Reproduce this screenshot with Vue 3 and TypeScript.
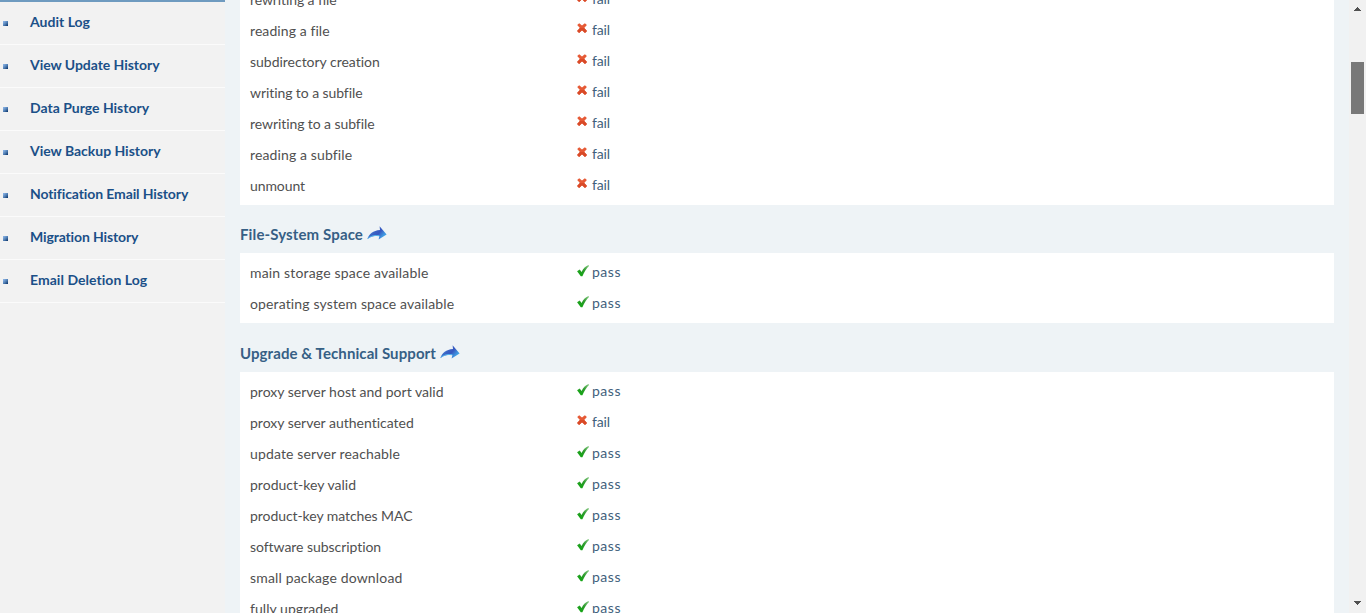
<script setup lang="ts">
type Status = 'pass' | 'fail'
interface Row { label: string; status: Status; w: number }
interface Section { title: string; w: number; rows: Row[] }

const links = [
  { label: 'Audit Log', w: 60 },
  { label: 'View Update History', w: 129.5 },
  { label: 'Data Purge History', w: 119 },
  { label: 'View Backup History', w: 130.5 },
  { label: 'Notification Email History', w: 158.5 },
  { label: 'Migration History', w: 108.5 },
  { label: 'Email Deletion Log', w: 117.5 },
]

const row = (label: string, status: Status, w: number): Row => ({ label, status, w })

const sections: Section[] = [
  {
    title: '',
    w: 0,
    rows: [
      row('rewriting a file', 'fail', 86.5),
      row('reading a file', 'fail', 79.5),
      row('subdirectory creation', 'fail', 130),
      row('writing to a subfile', 'fail', 112.5),
      row('rewriting to a subfile', 'fail', 124.5),
      row('reading a subfile', 'fail', 102),
      row('unmount', 'fail', 55),
    ],
  },
  {
    title: 'File-System Space',
    w: 123,
    rows: [
      row('main storage space available', 'pass', 178.5),
      row('operating system space available', 'pass', 204.5),
    ],
  },
  {
    title: 'Upgrade & Technical Support',
    w: 196,
    rows: [
      row('proxy server host and port valid', 'pass', 193.5),
      row('proxy server authenticated', 'fail', 164),
      row('update server reachable', 'pass', 150),
      row('product-key valid', 'pass', 106),
      row('product-key matches MAC', 'pass', 162.5),
      row('software subscription', 'pass', 131),
      row('small package download', 'pass', 152.5),
      row('fully upgraded', 'pass', 88.5),
    ],
  },
]

const vFit = {
  mounted(el: HTMLElement, binding: { value: number }) {
    const natural = el.getBoundingClientRect().width
    const count = (el.textContent ?? '').length
    el.style.letterSpacing = `${(binding.value - natural) / count}px`
  },
}
</script>

<template>
  <div class="page">
    <nav class="sidebar">
      <a v-for="l in links" :key="l.label" class="link">
        <i class="bullet"></i><span v-fit="l.w">{{ l.label }}</span>
      </a>
    </nav>
    <main class="content">
      <section v-for="s in sections" :key="s.title" class="section">
        <h3 v-if="s.title" class="title">
          <span v-fit="s.w">{{ s.title }}</span>
          <svg class="arrow" width="20" height="14" viewBox="0 0 20 14">
            <defs>
              <linearGradient id="arrowFill" x1="0" y1="0.2" x2="1" y2="0.8">
                <stop offset="0" stop-color="#49a9e6" />
                <stop offset="0.38" stop-color="#3a62c4" />
                <stop offset="0.58" stop-color="#3658c0" />
                <stop offset="0.8" stop-color="#3f92de" />
                <stop offset="1" stop-color="#42b6ef" />
              </linearGradient>
            </defs>
            <path d="M0.3 12.9C2.2 8.2 6 4.4 13 4L12.6 0.2L19.6 8.4L11.6 13.6L12.4 10C8.4 9 4.6 10.2 0.3 12.9Z" fill="url(#arrowFill)" />
            <path d="M.8 12.4C4 9.8 8 8.9 12.4 9.8" fill="none" stroke="#55b8ee" stroke-width="1" />
          </svg>
        </h3>
        <div class="panel">
          <div v-for="r in s.rows" :key="r.label" class="row">
            <div class="label"><span v-fit="r.w">{{ r.label }}</span></div>
            <div class="status">
              <svg v-if="r.status === 'fail'" class="icon cross" width="14" height="12" viewBox="0 -0.6 14 12">
                <path d="M1.2 2.4L3.2.6L6 3L8.9.6L10.9 2.4L8.2 5.3L11 8.4L9 10.3L6 7.7L3.1 10.3L1.1 8.4L3.9 5.4Z" fill="#e65a36" />
                <path d="M3.9 5.4L8.2 5.3L11 8.4L9 10.3L6 7.7L3.1 10.3L1.1 8.4Z" fill="#d94a28" />
              </svg>
              <svg v-else class="icon" width="14" height="12" viewBox="0 0 14 12">
                <defs>
                  <linearGradient id="checkFill" x1="1" y1="0" x2="0.3" y2="1">
                    <stop offset="0" stop-color="#8acb86" />
                    <stop offset="0.5" stop-color="#2d9b2d" />
                    <stop offset="1" stop-color="#10a510" />
                  </linearGradient>
                </defs>
                <path d="M1.1 6.2L3.7 4.6L5.6 6.9C7 4 9.2 1.4 12.5.1L13 .9C10.4 3.5 8.2 6.8 6.4 11.3L4.8 11.3Z" fill="url(#checkFill)" />
              </svg>
              <span v-fit="r.status === 'fail' ? 18 : 29">{{ r.status }}</span>
            </div>
          </div>
        </div>
      </section>
    </main>
    <div class="scrollbar">
      <svg class="cap" width="9" height="5" viewBox="0 0 9 5" shape-rendering="crispEdges"><path d="M4 0h1v1h1v1h1v1h1v1H1V3h1V2h1V1h1z" fill="#505050" /></svg>
      <div class="thumb"></div>
      <svg class="cap end" width="9" height="5" viewBox="0 0 9 5" shape-rendering="crispEdges"><path d="M1 0h7v1H7v1H6v1H5v1H4V3H3V2H2V1H1z" fill="#505050" /></svg>
    </div>
  </div>
</template>

<style>
body { overflow: hidden; }
</style>

<style scoped>
.page {
  display: flex;
  height: 613px;
  overflow: hidden;
  background: #eef3f6;
  font-family: Lato, "Open Sans", sans-serif;
  font-size: 14px;
  color: #505050;
  white-space: nowrap;
}
.sidebar {
  flex: 0 0 225px;
  box-sizing: border-box;
  border-top: 2px solid #6f9bc0;
  background: #f2f2f2;
}
.link {
  display: flex;
  align-items: center;
  box-sizing: border-box;
  height: 43px;
  padding: 0 0 4px 3px;
  border-bottom: 1px solid #fbfbfb;
  color: #1b5088;
  font-size: 14px;
  font-weight: 700;
}
.bullet {
  width: 5px;
  height: 5px;
  margin: 5px 22px 0 0;
  background: linear-gradient(135deg, #85aee0 15%, #5583b8 50%, #153f75 90%);
}
.content {
  flex: 1;
  padding: 0 15px;
  margin-top: -20px;
}
.title {
  display: flex;
  align-items: center;
  box-sizing: border-box;
  height: 48px;
  margin: 0;
  padding-top: 10px;
  color: #365f85;
  font-size: 15px;
  font-weight: 700;
}
.section:nth-child(3) .title { height: 49px; }
.arrow { margin: -2px 0 0 4px; }
.panel {
  padding: 5px 0 3px;
  background: #fff;
}
.row {
  display: flex;
  height: 31px;
  line-height: 29px;
}
.label {
  flex: 0 0 326px;
  padding-left: 10px;
}
.status {
  display: flex;
  height: 29px;
  line-height: 27px;
  color: #3f5f7c;
}
.icon { margin: 7px 2px 0 0; }
.cross { margin-top: 6px; }
.scrollbar {
  display: flex;
  flex: 0 0 17px;
  flex-direction: column;
  align-items: center;
  box-sizing: border-box;
  padding: 7px 0;
  background: #f1f1f1;
}
.cap { flex: none; }
.thumb {
  width: 13px;
  height: 52px;
  margin-top: 50px;
  background: #787878;
}
.end { margin-top: auto; }
</style>
